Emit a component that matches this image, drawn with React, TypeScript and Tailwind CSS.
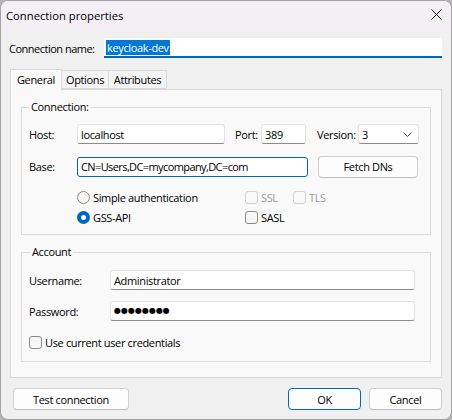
import React from "react";

function TextBox({ w, children, focused }: { w: string; children?: React.ReactNode; focused?: boolean }) {
  return (
    <div
      className={
        "h-[20px] bg-white flex items-center pl-[3px] rounded-[3px] whitespace-nowrap " +
        w +
        (focused
          ? " border border-[#0067c0]"
          : " border border-[#e3e3e3] border-b-[#8a8a8a]")
      }
    >
      {children}
    </div>
  );
}

function Radio({ checked, label }: { checked?: boolean; label: string }) {
  return (
    <div className="h-[20px] flex items-center whitespace-nowrap">
      {checked ? (
        <div className="w-[13px] h-[13px] rounded-full bg-[#0067c0] flex items-center justify-center">
          <div className="w-[5px] h-[5px] rounded-full bg-white" />
        </div>
      ) : (
        <div className="w-[13px] h-[13px] rounded-full bg-[#f6f6f6] border border-[#8a8a8a]" />
      )}
      <span className="ml-[3px]">{label}</span>
    </div>
  );
}

function Check({ label, disabled }: { label: string; disabled?: boolean }) {
  return (
    <div className="h-[20px] flex items-center whitespace-nowrap">
      <div
        className={
          "w-[13px] h-[13px] rounded-[3px] border " +
          (disabled ? "border-[#cfcfcf] bg-[#f9f9f9]" : "border-[#8a8a8a] bg-[#f6f6f6]")
        }
      />
      <span className={"ml-[3px] " + (disabled ? "text-[#9c9c9c]" : "")}>{label}</span>
    </div>
  );
}

function Button({ w, children, primary }: { w: string; children: React.ReactNode; primary?: boolean }) {
  return (
    <div
      className={
        "h-[22px] rounded-[4px] bg-[#fdfdfd] flex items-center justify-center whitespace-nowrap " +
        w +
        (primary ? " border border-[#0067c0]" : " border border-[#d0d0d0] border-b-[#bcbcbc]")
      }
    >
      {children}
    </div>
  );
}

export default function App() {
  return (
    <div className="w-[452px] h-[420px] bg-[#b5b5b5] font-['Open_Sans',sans-serif] text-[11px] tracking-[-0.35px] text-black leading-none">
      <div className="w-full h-full rounded-[8px] border border-[#a3a3a3] bg-[#f0f0f0] overflow-hidden flex flex-col">
        {/* Title bar */}
        <div className="h-[29px] shrink-0 bg-[#f3eff5] flex items-center justify-between pl-[5px] pr-[9px]">
          <span className="text-[11.25px] tracking-normal">Connection properties</span>
          <svg width="11" height="11" viewBox="0 0 11 11" className="mt-[-2px]">
            <path d="M0.5 0.5 L10.5 10.5 M10.5 0.5 L0.5 10.5" stroke="#1a1a1a" strokeWidth="1" />
          </svg>
        </div>

        {/* Client */}
        <div className="flex-1 flex flex-col pl-[8px] pr-[9px]">
          <div className="mt-[8px] h-[20px] flex items-center whitespace-nowrap">
            <span className="tracking-[-0.5px]">Connection name:</span>
            <div className="ml-auto w-[338px] h-[20px] bg-white border-b-2 border-[#0067c0] flex items-center pl-[2px]">
              <span className="bg-[#0078d7] text-white px-[1px] h-[15px] flex items-center">keycloak-dev</span>
            </div>
          </div>

          {/* Tabs */}
          <div className="mt-[10px] ml-[1px] h-[21px] flex items-end">
            <div className="relative z-10 w-[52px] h-[21px] border border-[#d9d9d9] border-b-0 bg-[#f9f9f9] flex items-center justify-center pb-[2px] mb-[-1px]">
              General
            </div>
            <div className="w-[47px] h-[19px] border border-[#d9d9d9] border-l-0 bg-[#f4f4f4] flex items-center justify-center">
              Options
            </div>
            <div className="w-[58px] h-[19px] border border-[#d9d9d9] border-l-0 bg-[#f4f4f4] flex items-center justify-center">
              Attributes
            </div>
          </div>

          {/* Panel */}
          <div className="ml-[1px] w-[432px] h-[289px] border border-[#d9d9d9] bg-[#f9f9f9] flex flex-col px-[10px]">
            <fieldset className="mt-[9px] border border-[#dcdcdc] px-[7px] pb-[7px]">
              <legend className="px-[2px] leading-[16px]">Connection:</legend>
              <div className="mt-[9px] flex items-center h-[20px]">
                <span className="w-[48px]">Host:</span>
                <TextBox w="w-[148px]">localhost</TextBox>
                <span className="ml-[10px] w-[26px]">Port:</span>
                <TextBox w="w-[45px]">389</TextBox>
                <span className="ml-[11px] w-[41px]">Version:</span>
                <div className="w-[61px] h-[20px] bg-white border border-[#e3e3e3] border-b-[#8a8a8a] rounded-[3px] flex items-center justify-between pl-[3px] pr-[6px]">
                  <span>3</span>
                  <svg width="9" height="5" viewBox="0 0 9 5">
                    <path d="M0.5 0.5 L4.5 4.5 L8.5 0.5" fill="none" stroke="#444" strokeWidth="1" />
                  </svg>
                </div>
              </div>
              <div className="mt-[12px] flex items-center h-[21px]">
                <span className="w-[48px]">Base:</span>
                <TextBox w="w-[231px]" focused>
                  <span className="tracking-[-0.6px]">CN=Users,DC=mycompany,DC=com</span>
                </TextBox>
                <div className="ml-[10px]">
                  <Button w="w-[100px]">Fetch DNs</Button>
                </div>
              </div>
              <div className="mt-[10px] ml-[48px] flex">
                <div className="w-[168px] flex flex-col">
                  <Radio label="Simple authentication" />
                  <Radio checked label="GSS-API" />
                </div>
                <div className="flex flex-col">
                  <div className="flex">
                    <div className="w-[48px]">
                      <Check disabled label="SSL" />
                    </div>
                    <Check disabled label="TLS" />
                  </div>
                  <Check label="SASL" />
                </div>
              </div>
            </fieldset>

            <fieldset className="mt-[9px] border border-[#dcdcdc] px-[7px] pb-[9px]">
              <legend className="ml-[1px] px-[2px] leading-[16px]">Account</legend>
              <div className="mt-[10px] flex items-center h-[20px]">
                <span className="w-[81px]">Username:</span>
                <TextBox w="w-[305px]">Administrator</TextBox>
              </div>
              <div className="mt-[11px] flex items-center h-[20px]">
                <span className="w-[81px]">Password:</span>
                <TextBox w="w-[305px]">
                  <span className="font-['DejaVu_Sans',sans-serif] text-[8px] tracking-[0px]">●●●●●●●●</span>
                </TextBox>
              </div>
              <div className="mt-[11px]">
                <Check label="Use current user credentials" />
              </div>
            </fieldset>
          </div>

          {/* Buttons */}
          <div className="mt-[10px] flex items-center">
            <div className="ml-[4px]">
              <Button w="w-[116px]">Test connection</Button>
            </div>
            <div className="ml-auto flex gap-[8px]">
              <Button w="w-[73px]" primary>
                OK
              </Button>
              <Button w="w-[73px]">Cancel</Button>
            </div>
          </div>
        </div>
      </div>
    </div>
  );
}
